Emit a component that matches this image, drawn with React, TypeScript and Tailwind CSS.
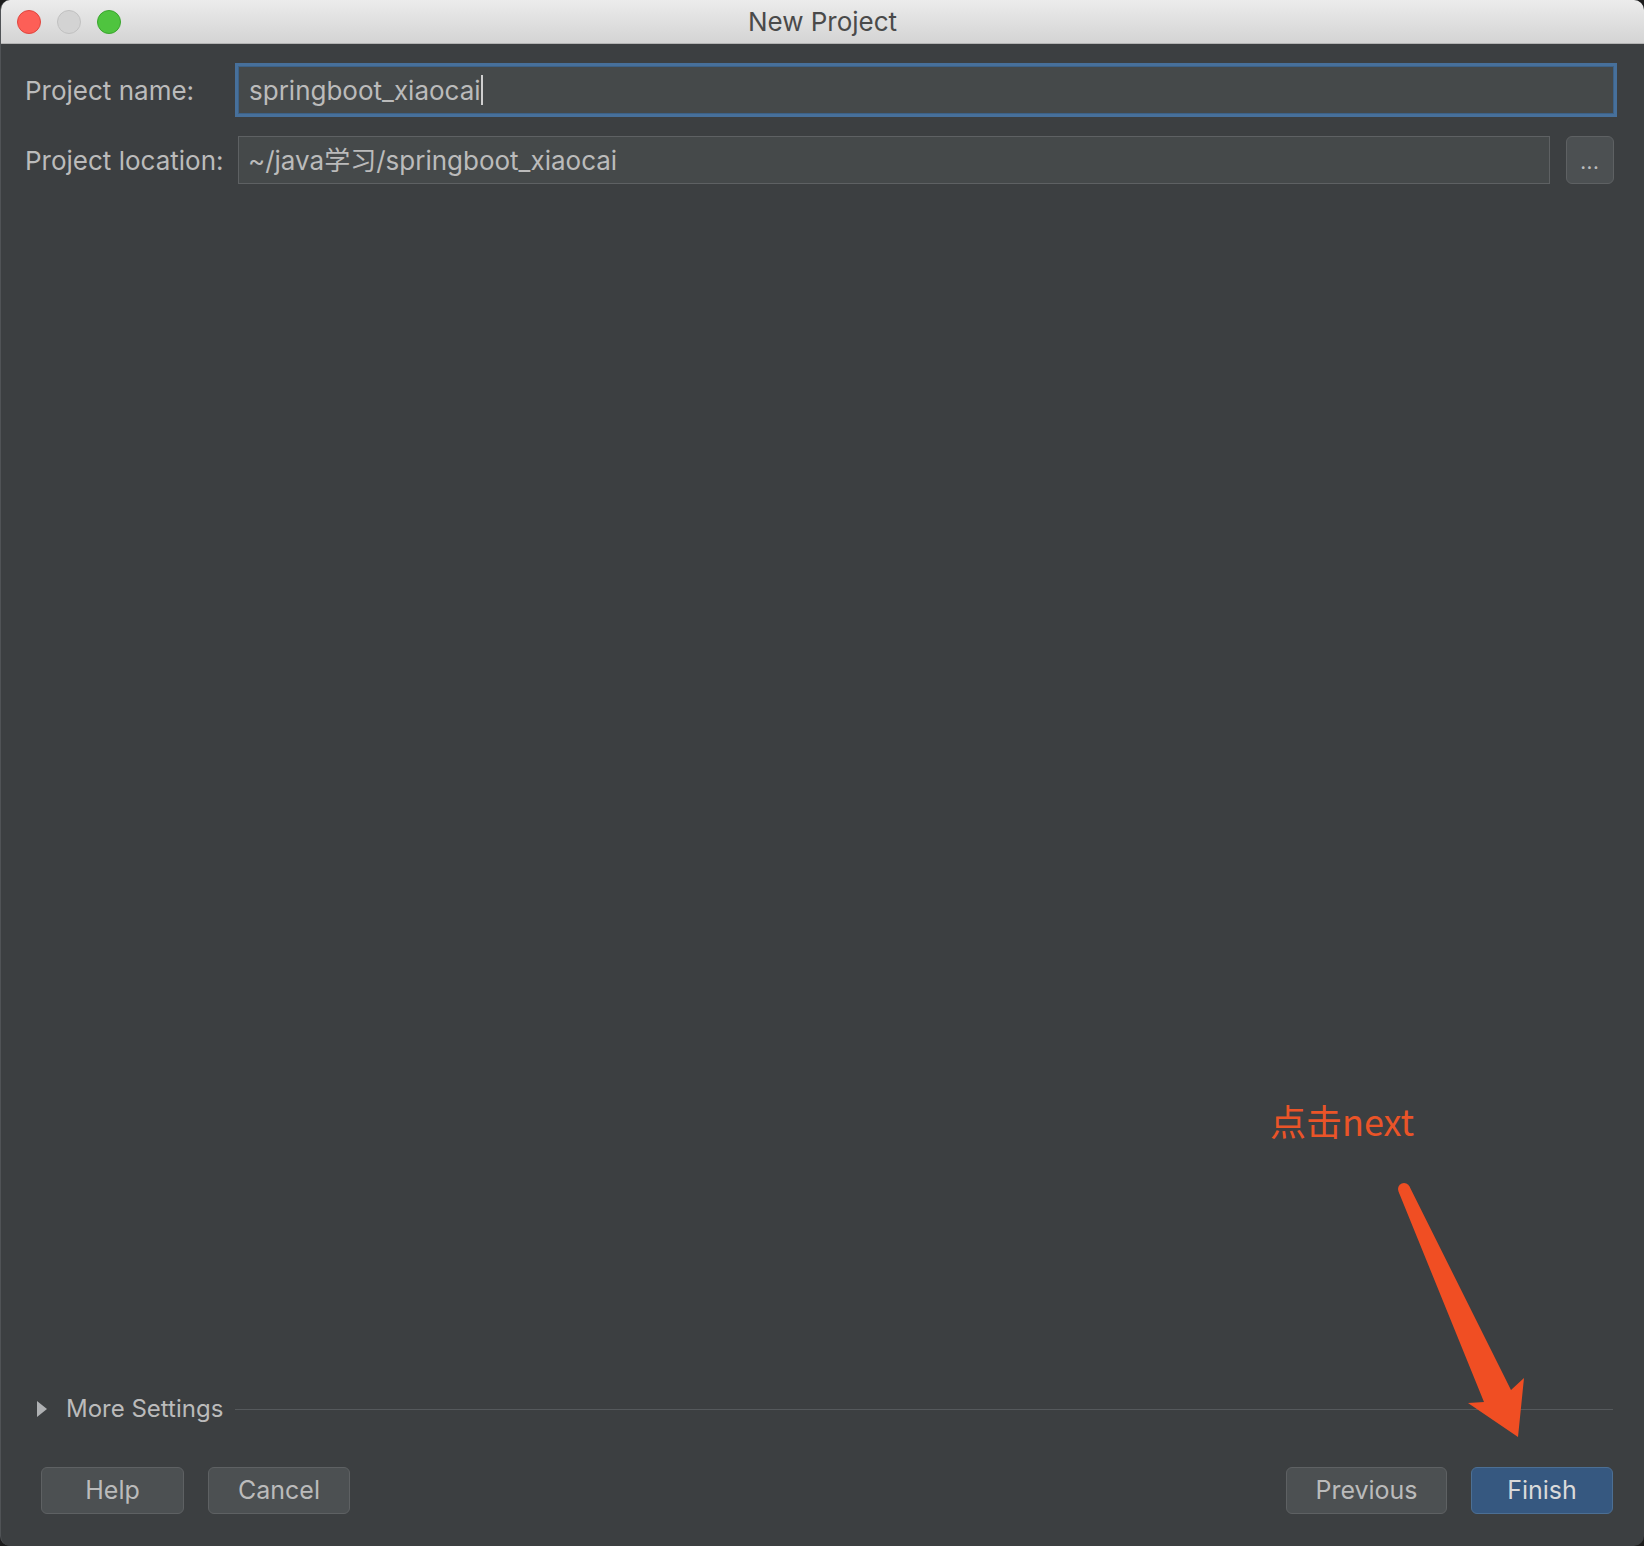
import React from "react";

const uiFont = { fontFamily: 'Inter, "Noto Sans CJK SC", sans-serif' };

const TrafficLights: React.FC = () => (
  <div className="flex items-center gap-[16px] pl-[16px]">
    <span className="w-[24px] h-[24px] rounded-full bg-[#fd5f57] border border-[#df463f]" />
    <span className="w-[24px] h-[24px] rounded-full bg-[#d3d3d3] border border-[#c0c0c0]" />
    <span className="w-[24px] h-[24px] rounded-full bg-[#4fc43f] border border-[#3aa52e]" />
  </div>
);

const DialogButton: React.FC<{ label: string; width: string; primary?: boolean }> = ({
  label,
  width,
  primary,
}) => (
  <button
    className={`${width} h-[47px] rounded-[6px] border text-[25px] leading-none ${
      primary
        ? "bg-[#365880] border-[#4c6f94] text-[#dadada]"
        : "bg-[#4c5052] border-[#5e6163] text-[#bbbbbb]"
    }`}
  >
    {label}
  </button>
);

const App: React.FC = () => {
  return (
    <div className="w-[1644px] h-[1546px] bg-[#1c1c1c]" style={uiFont}>
      <div className="relative w-full h-full flex flex-col bg-[#3c3f41] rounded-[10px] overflow-hidden border-l border-[#505356]">
        {/* Title bar */}
        <div className="h-[44px] shrink-0 grid grid-cols-[1fr_auto_1fr] items-center bg-gradient-to-b from-[#ececec] to-[#d4d4d4] border-b border-[#b3b3b3]">
          <TrafficLights />
          <div className="text-[26px] text-[#4a4a4a] leading-none">New Project</div>
          <div />
        </div>

        {/* Content */}
        <div className="flex-1 flex flex-col pl-[24px]">
          <div className="pt-[22px] pr-[30px] grid grid-cols-[213px_1fr] gap-y-[22px] items-center text-[26px] text-[#bbbbbb]">
            <div>Project name:</div>
            <div className="h-[48px] flex items-center pl-[10px] bg-[#45494a] border border-[#3d6288] ring-[3px] ring-[#47709b]">
              <span>springboot_xiaocai</span>
              <span className="w-[2px] h-[30px] bg-[#cfcfcf]" />
            </div>

            <div>Project location:</div>
            <div className="flex items-center gap-[16px]">
              <div className="flex-1 h-[48px] flex items-center pl-[9px] bg-[#45494a] border border-[#5e6163]">
                ~/java学习/springboot_xiaocai
              </div>
              <button className="w-[48px] h-[48px] rounded-[6px] bg-[#4c5052] border border-[#5e6163] flex items-end justify-center pb-[12px] text-[16px] font-bold leading-none text-[#bbbbbb] tracking-[1px]">
                ...
              </button>
            </div>
          </div>

          <div className="flex-1" />

          {/* More settings */}
          <div className="h-[30px] flex items-center pr-[31px] text-[24px] text-[#bbbbbb]">
            <svg width="10" height="16" viewBox="0 0 10 16" className="ml-[12px]">
              <path d="M0 0 L10 8 L0 16 Z" fill="#afb1b3" />
            </svg>
            <span className="ml-[19px]">More Settings</span>
            <div className="flex-1 h-px bg-[#55595c] ml-[12px]" />
          </div>

          {/* Buttons */}
          <div className="mt-[43px] mb-[32px] flex items-center pr-[31px]">
            <div className="ml-[16px] flex gap-[24px]">
              <DialogButton label="Help" width="w-[143px]" />
              <DialogButton label="Cancel" width="w-[142px]" />
            </div>
            <div className="flex-1" />
            <div className="flex gap-[24px]">
              <DialogButton label="Previous" width="w-[161px]" />
              <DialogButton label="Finish" width="w-[142px]" primary />
            </div>
          </div>
        </div>

        {/* Annotation overlay */}
        <div
          className="absolute left-[1269px] top-[1102px] text-[36px] leading-none text-[#ea5428]"
          style={{ fontFamily: '"Noto Sans CJK SC", "Noto Sans", sans-serif' }}
        >
          点击next
        </div>
        <svg
          className="absolute inset-0 pointer-events-none"
          width="1644"
          height="1546"
          viewBox="0 0 1644 1546"
        >
          <circle cx="1403" cy="1189" r="6" fill="#f04e23" />
          <path
            d="M1397.5 1191.5 L1483 1402 L1467 1403 L1517 1437 L1523 1378 L1510 1390 L1408.5 1186.5 Z"
            fill="#f04e23"
          />
        </svg>
      </div>
    </div>
  );
};

export default App;
